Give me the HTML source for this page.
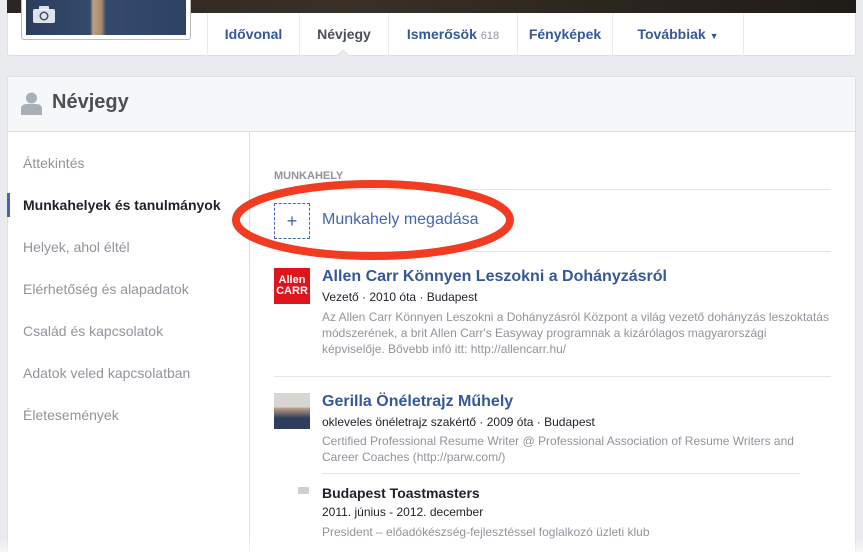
<!DOCTYPE html>
<html style="width:863px;height:552px;overflow:hidden"><head><meta charset="utf-8"><style>
*{margin:0;padding:0;box-sizing:border-box}
body{width:863px;height:552px;background:#e9ebee;font-family:"Liberation Sans",Arial,sans-serif;position:relative;overflow:hidden}
.abs{position:absolute}
.card{position:absolute;background:#fff;border:1px solid #dddfe2;border-radius:3px}
.tab{position:absolute;top:13px;height:43px;border-left:1px solid #e9ebee;font-weight:bold;font-size:14px;color:#365899;line-height:42px;text-align:center}
.nav{position:absolute;left:23px;font-size:14px;color:#90949c}
.sep{position:absolute;height:1px;background:#e5e5e5}
.t1{font-size:16px;font-weight:bold;color:#365899}
.t2{font-size:12px;color:#1d2129}
.t3{font-size:12px;color:#90949c;line-height:16px}
</style></head><body>
<div class="card" style="left:7px;top:-2px;width:849px;height:58px"></div>
<div class="abs" style="left:7px;top:0;width:849px;height:13px;background:linear-gradient(90deg,#2a2520,#3a3028 40%,#2c261f 70%,#1f1b17)"></div>
<div class="abs" style="left:21px;top:0;width:170px;height:40px;background:#fff;border:1px solid #bbb;border-top:none;border-radius:0 0 3px 3px"></div>
<div class="abs" style="left:26px;top:0;width:160px;height:35px;background:linear-gradient(90deg,#2c3e5e 0,#34496c 40%,#c0a080 42%,#a98b6c 47%,#34496c 50%,#2e4264 100%)"></div>
<svg class="abs" style="left:32px;top:6px" width="24" height="18" viewBox="0 0 24 18"><rect x="1" y="3" width="22" height="14" rx="2" fill="#fff" opacity=".85"/><rect x="7" y="0" width="10" height="4" rx="1" fill="#fff" opacity=".85"/><circle cx="12" cy="10" r="4.5" fill="#3a4d70"/><circle cx="12" cy="10" r="3" fill="#fff" opacity=".85"/></svg>
<div class="tab" style="left:207px;width:92px">Idővonal</div>
<div class="tab" style="left:299px;width:89px;color:#4b4f56">Névjegy</div>
<svg class="abs" style="left:336px;top:50px" width="14" height="7"><path d="M0 7 L7 0 L14 7" fill="#e9ebee" stroke="#dddfe2"/></svg>
<div class="tab" style="left:388px;width:129px">Ismerősök <span style="font-weight:normal;font-size:11px;color:#90949c">618</span></div>
<div class="tab" style="left:517px;width:95px">Fényképek</div>
<div class="tab" style="left:612px;width:131px">Továbbiak <span style="font-size:9px">▼</span></div>
<div class="abs" style="left:743px;top:13px;width:1px;height:43px;background:#e9ebee"></div>

<div class="card" style="left:7px;top:76px;width:849px;height:490px"></div>
<div class="abs" style="left:8px;top:77px;width:847px;height:55px;background:#f6f7f9;border-bottom:1px solid #dddfe2"></div>
<svg class="abs" style="left:21px;top:92px" width="21" height="23" viewBox="0 0 21 23"><circle cx="10.5" cy="6" r="5.5" fill="#a9afb8"/><path d="M0 23 V17 Q0 12 6 12 H15 Q21 12 21 17 V23Z" fill="#a9afb8"/></svg>
<div class="abs" style="left:52px;top:91px;font-size:20px;font-weight:bold;color:#4b4f56">Névjegy</div>
<div class="abs" style="left:249px;top:132px;width:1px;height:420px;background:#dddfe2"></div>

<div class="nav" style="top:155px">Áttekintés</div>
<div class="abs" style="left:7px;top:193px;width:3px;height:24px;background:#4267b2"></div>
<div class="nav" style="top:197px;color:#1d2129;font-weight:bold">Munkahelyek és tanulmányok</div>
<div class="nav" style="top:239px">Helyek, ahol éltél</div>
<div class="nav" style="top:281px">Elérhetőség és alapadatok</div>
<div class="nav" style="top:323px">Család és kapcsolatok</div>
<div class="nav" style="top:365px">Adatok veled kapcsolatban</div>
<div class="nav" style="top:407px">Életesemények</div>

<div class="abs" style="left:274px;top:170px;font-size:11px;font-weight:bold;color:#90949c">MUNKAHELY</div>
<div class="sep" style="left:274px;top:189px;width:557px"></div>
<div class="abs" style="left:274px;top:203px;width:36px;height:36px;border:1px dashed #4267b2;color:#4267b2;font-size:18px;text-align:center;line-height:34px">+</div>
<div class="abs" style="left:322px;top:211px;font-size:16px;color:#4267b2">Munkahely megadása</div>
<div class="sep" style="left:274px;top:251px;width:557px"></div>
<svg class="abs" style="left:228px;top:177px" width="292" height="86"><ellipse cx="145" cy="43" rx="137" ry="36" fill="none" stroke="#f23c22" stroke-width="8"/></svg>

<div class="abs" style="left:274px;top:268px;width:36px;height:36px;background:#e0141c;color:#fff;font-weight:bold;font-size:11px;line-height:11px;padding-top:7px;text-align:center">Allen<br>CARR</div>
<div class="abs t1" style="left:322px;top:268px">Allen Carr Könnyen Leszokni a Dohányzásról</div>
<div class="abs t2" style="left:322px;top:290px">Vezető · 2010 óta · Budapest</div>
<div class="abs t3" style="left:322px;top:309px;width:510px">Az Allen Carr Könnyen Leszokni a Dohányzásról Központ a világ vezető dohányzás leszoktatás módszerének, a brit Allen Carr's Easyway programnak a kizárólagos magyarországi képviselője. Bővebb infó itt: http://allencarr.hu/</div>
<div class="sep" style="left:274px;top:376px;width:557px"></div>

<div class="abs" style="left:274px;top:393px;width:36px;height:36px;background:linear-gradient(180deg,#d8d6d2 0,#d8d6d2 40%,#c9a58a 20%,#2e3d5c 70%);"></div>
<div class="abs t1" style="left:322px;top:393px">Gerilla Önéletrajz Műhely</div>
<div class="abs t2" style="left:322px;top:415px">okleveles önéletrajz szakértő · 2009 óta · Budapest</div>
<div class="abs t3" style="left:322px;top:433px;width:500px">Certified Professional Resume Writer @ Professional Association of Resume Writers and Career Coaches (http://parw.com/)</div>
<div class="sep" style="left:322px;top:473px;width:478px"></div>
<div class="abs" style="left:298px;top:487px;width:11px;height:7px;background:#ccd0d5;border-radius:1px"></div>
<div class="abs" style="left:322px;top:485px;font-size:14px;font-weight:bold;color:#1d2129">Budapest Toastmasters</div>
<div class="abs t2" style="left:322px;top:505px">2011. június - 2012. december</div>
<div class="abs t3" style="left:322px;top:524px">President – előadókészség-fejlesztéssel foglalkozó üzleti klub</div>
<div class="abs" style="left:0;top:538px;width:863px;height:14px;background:linear-gradient(rgba(255,255,255,0),rgba(255,255,255,.6))"></div>
</body></html>
